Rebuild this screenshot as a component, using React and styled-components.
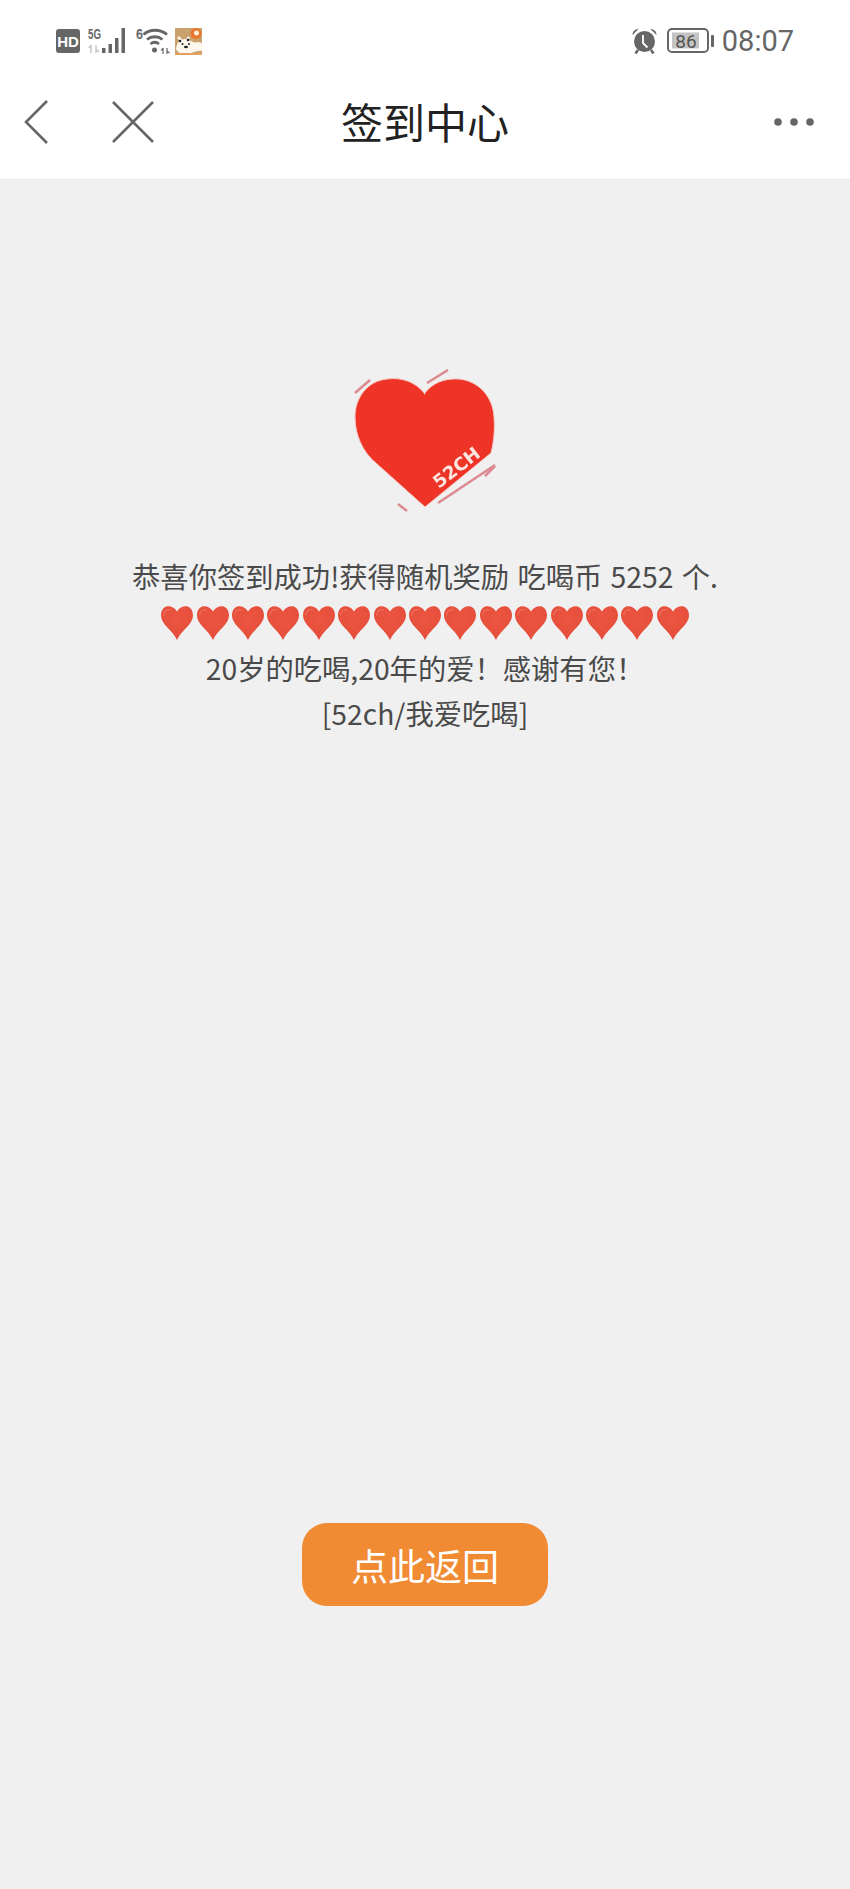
import React from "react";
import styled, { createGlobalStyle } from "styled-components";

const Global = createGlobalStyle`
  html, body { margin: 0; padding: 0; background: #f0f0f0; }
  body { font-family: "Noto Sans CJK SC", "Noto Sans", sans-serif; }
`;
const Page = styled.div`
  width: 850px; height: 1889px; display: flex; flex-direction: column; background: #f0f0f0; overflow: hidden;
`;
const Header = styled.header`
  background: #fff; border-bottom: 1px solid #eaeaea; height: 179px; flex: none; display: flex; flex-direction: column;
`;
const StatusBar = styled.div`
  height: 82px; flex: none; display: flex; align-items: center; justify-content: space-between; padding: 0 56px 0 56px; color: #666;
`;
const StatusGroup = styled.div`
  display: flex; align-items: center;
`;
const Clock = styled.span`
  font-family: "Roboto", sans-serif; font-size: 29px; line-height: 1; color: #666; margin-left: 7px;
`;
const Nav = styled.nav`
  flex: 1; display: grid; grid-template-columns: 1fr auto 1fr; align-items: center; padding: 0 24px 18px 24px;
`;
const NavSide = styled.div`
  display: flex; align-items: center; justify-content: ${p => p.$end ? "flex-end" : "flex-start"}; padding-right: ${p => p.$end ? 10 : 0}px;
`;
const NavIcon = styled.svg`
  display: block; flex: none; margin-right: ${p => p.$mr || 0}px;
`;
const Title = styled.h1`
  margin: 0; font-weight: 400; font-size: 42px; line-height: 1; text-align: center; color: #222; padding-bottom: 2px;
`;
const Main = styled.main`
  flex: 1; display: flex; flex-direction: column; align-items: center; padding-top: 189px;
`;
const LogoMark = styled.svg`
  display: block; filter: blur(.5px);
`;
const Message = styled.div`
  margin-top: 41px; width: 100%; text-align: center; color: #4a4a4a; font-size: 28.3px; word-spacing: 2px; line-height: 45px; white-space: nowrap;
`;
const Line = styled.div`
  height: 45px; display: flex; justify-content: center; align-items: center; white-space: pre;
`;
const Hearts = styled.div`
  height: 45px; display: flex; justify-content: center; align-items: center; gap: 3.4px; padding-top: 2px;
`;
const BackButton = styled.button`
  margin-top: 788px; width: 246px; height: 83px; border: 0; border-radius: 25px; background: #f08a33; color: #fff;
  font-family: inherit; font-size: 37px; padding: 0;
`;
const Glyph = styled.svg`
  display: block; flex: none; margin-left: ${p => p.$ml || 0}px;
`;

const HD = () => (
  <Glyph width="24" height="24" viewBox="0 0 24 24">
    <rect width="24" height="24" rx="3" fill="#666" />
    <text x="12" y="18" textAnchor="middle" fontFamily="Liberation Sans" fontWeight="700" fontSize="15" fill="#fff">HD</text>
  </Glyph>
);
const Signal = () => (
  <Glyph width="48" height="28" viewBox="0 0 48 28" $ml={8}>
    <text x="0" y="12" fontFamily="Liberation Sans" fontWeight="700" fontSize="14" fill="#666" textLength="13" lengthAdjust="spacingAndGlyphs">5G</text>
    <path d="M3 18v8M1 21l2-3M8 18v8M8 22l3 3" stroke="#c4c4c4" strokeWidth="1.400" fill="none" />
    <rect x="14" y="21" width="3.500" height="5" fill="#666" />
    <rect x="20.500" y="17" width="3.500" height="9" fill="#666" />
    <rect x="27" y="11" width="3.500" height="15" fill="#666" />
    <rect x="33.500" y="1" width="3.500" height="25" fill="#666" />
  </Glyph>
);
const Wifi = () => (
  <Glyph width="34" height="28" viewBox="0 0 34 28">
    <text x="0" y="12" fontFamily="Liberation Sans" fontWeight="700" fontSize="14" fill="#666" textLength="7" lengthAdjust="spacingAndGlyphs">6</text>
    <path d="M7.500 7.500C14 1.800 24 1.800 31 7.500M11 12.500c4.500-3.700 11-3.700 15.500 0M14.500 17c2.500-2 6-2 8.500 0" stroke="#666" strokeWidth="2.800" fill="none" />
    <circle cx="18.500" cy="23" r="2.500" fill="#666" />
    <path d="M27 21v6M25 23.500l2-2.500M31 21v6M31 24l2.500 2" stroke="#666" strokeWidth="1.200" fill="none" />
  </Glyph>
);
const Mascot = () => (
  <Glyph width="27" height="27" viewBox="0 0 27 27" $ml={5}>
    <rect width="27" height="27" fill="#c9a26e" />
    <circle cx="21" cy="5.500" r="5.500" fill="#e8762c" />
    <circle cx="21.500" cy="5" r="2.500" fill="#fff3dd" />
    <path d="M1 21C2 14 5 11 10 11c5 0 8 5 13 3 2 0 3 1 4 1v8c-5-1-9 2-14 3-5 .8-10-.6-12-5z" fill="#fdf7ed" />
    <path d="M3 9l3 3M14 9l-2 3" stroke="#fdf7ed" strokeWidth="2.500" />
    <circle cx="5" cy="13" r="1.300" fill="#222" />
    <circle cx="13" cy="12" r="1.300" fill="#222" />
    <circle cx="7.500" cy="16" r="1" fill="#222" />
    <circle cx="14" cy="16" r="1" fill="#222" />
    <ellipse cx="11" cy="19" rx="2" ry="1.200" fill="#222" />
    <path d="M0 25h27v2H0z" fill="#e6a060" />
  </Glyph>
);
const Alarm = () => (
  <Glyph width="25" height="26" viewBox="0 0 25 26">
    <path d="M.5 7C.5 3.500 3 1 6.500 1zM24.500 7c0-3.500-2.500-6-6-6z" fill="#666" />
    <path d="M6 22l-2.500 3.500M19 22l2.500 3.500" stroke="#666" strokeWidth="2.600" />
    <circle cx="12.500" cy="13.500" r="10.500" fill="#666" />
    <path d="M11 7v8l4.500 4.500" stroke="#f4f4f4" strokeWidth="2" fill="none" />
  </Glyph>
);
const Battery = () => (
  <Glyph width="48" height="26" viewBox="0 0 48 26" $ml={10}>
    <rect x="1" y="1" width="40" height="23" rx="4" fill="#fff" stroke="#666" strokeWidth="2" />
    <rect x="5" y="4.500" width="27" height="16" fill="#c4c4c4" />
    <text x="19" y="19.500" textAnchor="middle" fontFamily="Roboto" fontSize="19" fill="#555">86</text>
    <rect x="44" y="7" width="3" height="12" rx="1" fill="#666" />
  </Glyph>
);
const Back = () => (
  <NavIcon width="24" height="44" viewBox="0 0 24 44" $mr={64}>
    <path d="M23 1 2 22l21 21" stroke="#666" strokeWidth="2.600" fill="none" />
  </NavIcon>
);
const Close = () => (
  <NavIcon width="42" height="42" viewBox="0 0 42 42">
    <path d="M1 1l40 40M41 1 1 41" stroke="#666" strokeWidth="2.600" fill="none" />
  </NavIcon>
);
const More = () => (
  <NavIcon width="42" height="8" viewBox="0 0 42 8">
    <circle cx="4" cy="4" r="3.800" fill="#666" />
    <circle cx="20" cy="4" r="3.800" fill="#666" />
    <circle cx="36" cy="4" r="3.800" fill="#666" />
  </NavIcon>
);
const Logo = () => (
  <LogoMark width="143" height="143" viewBox="0 0 143 143">
    <g stroke="#dc8a90" strokeWidth="2.500" fill="none">
      <path d="M1 24 16 11" />
      <path d="M73 14 94 1" />
      <path d="M44 135 53 142" />
      <path d="M84 134 141 96" />
      <path d="M131 107 141 97" />
    </g>
    <path d="M71 25C62 13 48 8 33 10 13 12 1 29 1 48c0 17 7 35 22 47l48 43 66-54c3-12 4-24 3-36-1-20-15-36-35-38-15-1-27 4-35 15z" fill="#ee3427" stroke="#f6c9c4" strokeWidth="1" />
    <text x="0" y="0" transform="translate(85 120) rotate(-38)" fontFamily="DejaVu Sans" fontWeight="700" fontSize="18" fill="#fbe6e2" textLength="54" lengthAdjust="spacingAndGlyphs">52CH</text>
  </LogoMark>
);
const Heart = () => (
  <Glyph width="32" height="34" viewBox="0 0 142 150">
    <defs>
      <radialGradient id="hg" cx=".5" cy=".35" r=".75">
        <stop offset="0" stopColor="#ec5540" />
        <stop offset=".8" stopColor="#e44e3b" />
        <stop offset="1" stopColor="#d04433" />
      </radialGradient>
    </defs>
    <path d="M71 24C60 6 44 0 30 1 11 3 0 20 0 42c0 40 52 66 71 108 19-42 71-68 71-108 0-22-11-39-30-41-14-1-30 5-41 23z" fill="url(#hg)" />
    <path d="M12 40C13 22 28 12 42 17" stroke="#f58e7c" strokeWidth="5" fill="none" opacity=".55" strokeLinecap="round" />
  </Glyph>
);

export default function App() {
  return (
    <Page>
      <Global />
      <Header>
        <StatusBar>
          <StatusGroup>
            <HD />
            <Signal />
            <Wifi />
            <Mascot />
          </StatusGroup>
          <StatusGroup>
            <Alarm />
            <Battery />
            <Clock>08:07</Clock>
          </StatusGroup>
        </StatusBar>
        <Nav>
          <NavSide>
            <Back />
            <Close />
          </NavSide>
          <Title>签到中心</Title>
          <NavSide $end>
            <More />
          </NavSide>
        </Nav>
      </Header>
      <Main>
        <Logo />
        <Message>
          <Line>恭喜你签到成功!获得随机奖励 吃喝币 5252 个.</Line>
          <Hearts>{Array.from({ length: 15 }, (_, i) => <Heart key={i} />)}</Hearts>
          <Line>20岁的吃喝,20年的爱！感谢有您！</Line>
          <Line>[52ch/我爱吃喝]</Line>
        </Message>
        <BackButton>点此返回</BackButton>
      </Main>
    </Page>
  );
}
